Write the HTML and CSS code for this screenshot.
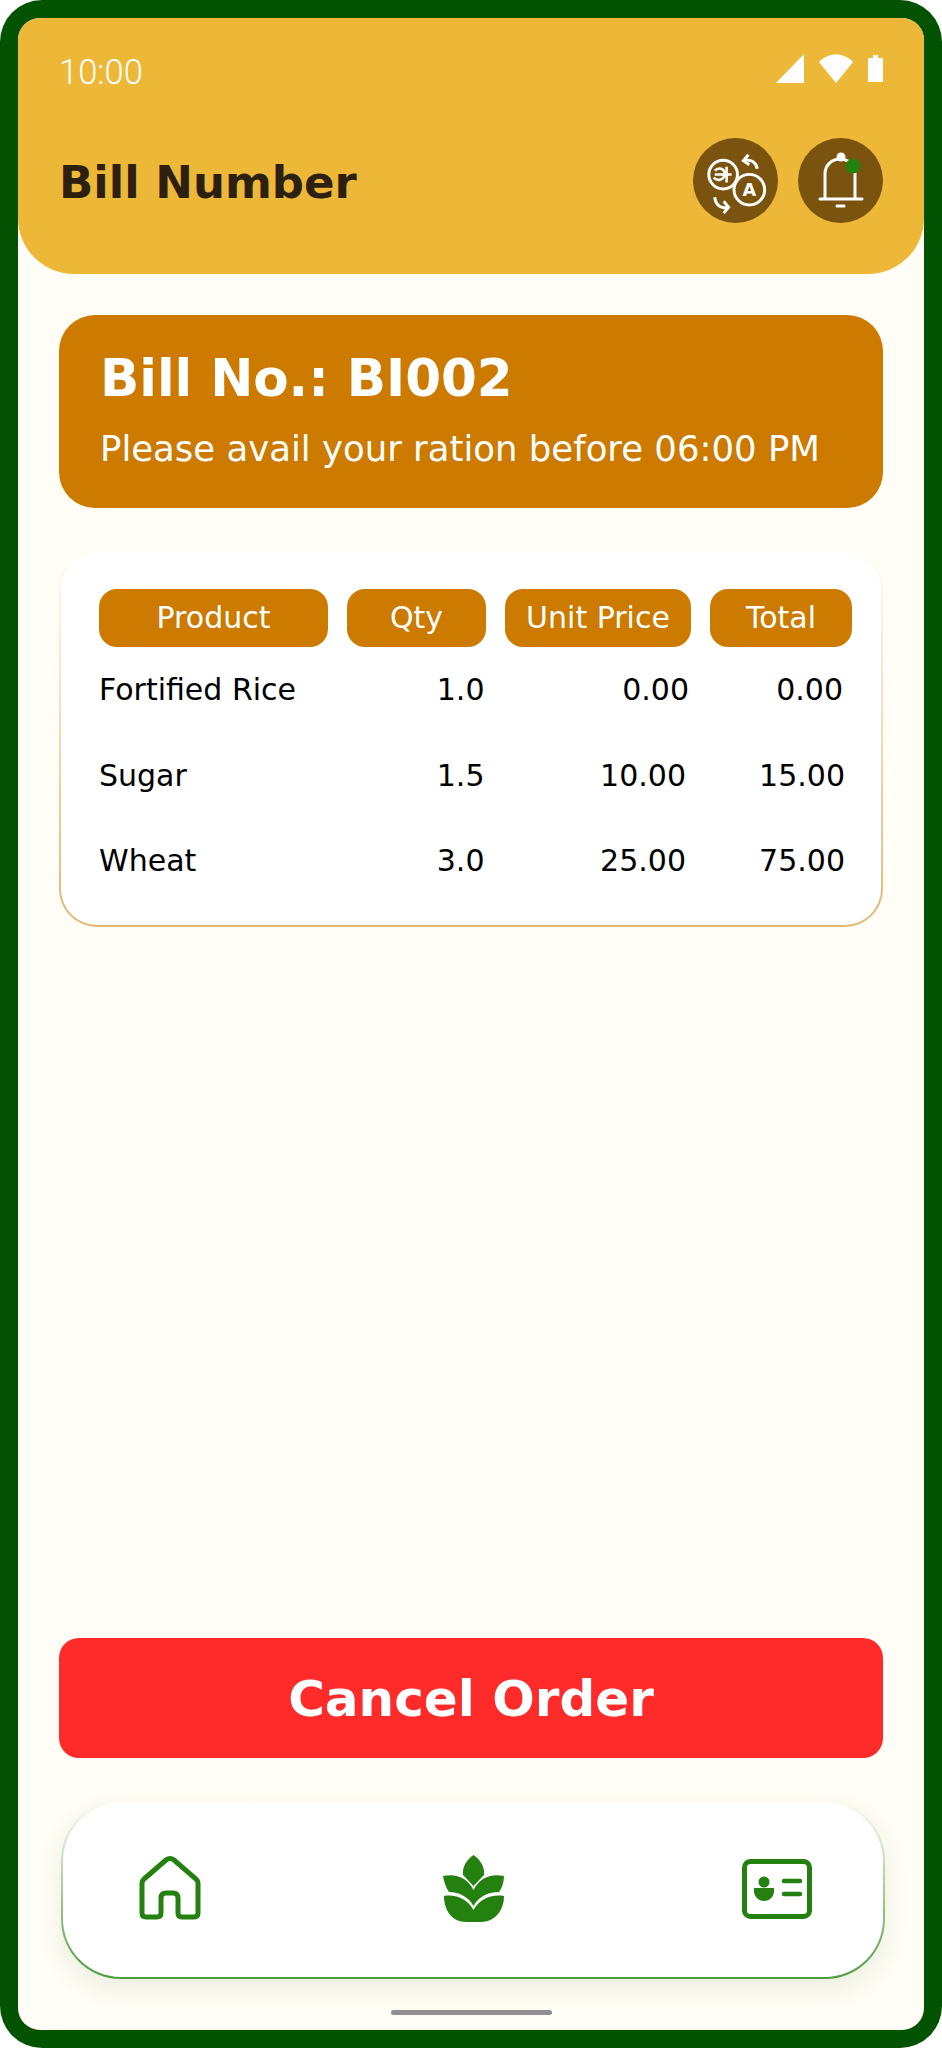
FILE: index.html
```html
<!DOCTYPE html>
<html lang="en">

<head>
    <meta charset="UTF-8">
    <meta name="viewport" content="width=device-width, initial-scale=1.0">
    <title>Bill Number</title>
    <link rel="stylesheet" href="styles.css">
</head>

<body>
    <div class="frame">
        <div class="screen">
            <header class="top">
                <div class="status">
                    <span class="time">10:00</span>
                    <div class="status-icons">
                        <svg class="sig" viewBox="0 0 28 29"><path d="M28 0V29H0Z" /></svg>
                        <svg class="wifi" viewBox="0 0 34 29"><path d="M0 8C9-2 25-2 34 8L17 29Z" /></svg>
                        <svg class="batt" viewBox="0 0 15 27"><path d="M5 0H10V3H15V27H0V3H5Z" /></svg>
                    </div>
                </div>
                <div class="title-row">
                    <h1>Bill Number</h1>
                    <div class="round-btns">
                        <div class="round-btn">
                            <svg viewBox="7 7 86 86" fill="none" stroke="#fff">
                                <circle cx="37.5" cy="44" r="14.5" stroke-width="3" />
                                <circle cx="64" cy="59.3" r="15.5" stroke-width="3" />
                                <path d="M29 40C33 36 39 38 39 43C39 50 31 51 28 47M29 44H46M41 36V52" stroke-width="2.6" />
                                <text x="64" y="65.5" class="lang-a">A</text>
                                <path d="M59 30C66 28 71 32 72 38M63 24L58 30L64 34" stroke-width="3" />
                                <path d="M42 77C35 79 30 75 29 67M38 71L43 77L38 83" stroke-width="3" />
                            </svg>
                        </div>
                        <div class="round-btn">
                            <svg viewBox="0 0 85 85" fill="none" stroke="#fff" stroke-width="3">
                                <path d="M27 61V36C27 27 34 21 42 21C50 21 57 27 57 36V61" />
                                <path d="M22 61H64M39 68H46" stroke-linecap="round" />
                                <circle cx="43" cy="19" r="4.5" fill="#fff" stroke="none" />
                                <circle cx="55" cy="28" r="7.5" fill="#248110" stroke="none" />
                            </svg>
                        </div>
                    </div>
                </div>
            </header>

            <main class="content">
                <section class="bill-card">
                    <h2>Bill No.: BI002</h2>
                    <p>Please avail your ration before 06:00 PM</p>
                </section>

                <section class="table-card">
                    <div class="cols head">
                        <div>Product</div>
                        <div>Qty</div>
                        <div>Unit Price</div>
                        <div>Total</div>
                    </div>
                    <div class="cols body">
                        <div>Fortified Rice</div>
                        <div class="num">1.0</div>
                        <div class="num zero">0.00</div>
                        <div class="num zero">0.00</div>

                        <div>Sugar</div>
                        <div class="num">1.5</div>
                        <div class="num">10.00</div>
                        <div class="num">15.00</div>

                        <div>Wheat</div>
                        <div class="num">3.0</div>
                        <div class="num">25.00</div>
                        <div class="num">75.00</div>
                    </div>
                </section>

                <button class="cancel">Cancel Order</button>

                <nav class="bottom-nav">
                    <svg viewBox="0 0 100 100" fill="none" stroke="#248110" stroke-width="5">
                        <path d="M24 39L46 20Q50 17 54 20L76 39Q78 41 78 43V73Q78 77 74 77H62Q58 77 58 73V58Q58 53 53 53H46Q41 53 41 58V73Q41 77 37 77H26Q22 77 22 73V43Q22 41 24 39Z" />
                    </svg>
                    <svg viewBox="0 0 100 100" fill="#248110">
                        <path d="M48.5 15C41 20 37 28 38 35L48.5 46L59 35C60 28 56 20 48.5 15Z" />
                        <path d="M18 36C31 33 43 38 48.5 50C54 38 66 33 79 36C79 42 77 48 74 52C64 52 54 56 48.5 66C43 56 33 52 24 52C21 48 19 42 18 36Z" />
                        <path d="M19 56C32 54 43 60 48.5 70C54 60 65 54 79 56C79 70 70 82 56 82H41C27 82 19 70 19 56Z" />
                    </svg>
                    <svg viewBox="0 0 100 100" fill="none" stroke="#248110">
                        <rect x="15.5" y="21.5" width="65" height="55" rx="6" stroke-width="5" />
                        <circle cx="35" cy="42" r="5.5" fill="#248110" stroke="none" />
                        <path d="M25 48H45C46 56 41 61 35 61C29 61 24 56 25 48Z" fill="#248110" stroke="none" />
                        <path d="M55 41H71M55 54H71" stroke-width="4.5" stroke-linecap="round" />
                    </svg>
                </nav>

                <div class="home-bar"></div>
            </main>
        </div>
    </div>
</body>

</html>
```

FILE: styles.css
```css
* {
    box-sizing: border-box;
}

body {
    margin: 0;
    background: #fff;
    font-family: "DejaVu Sans", sans-serif;
}

.frame {
    width: 942px;
    height: 2048px;
    padding: 18px;
    background: #035303;
    border-radius: 42px;
}

.screen {
    height: 100%;
    display: flex;
    flex-direction: column;
    background: #fffdf5;
    border-radius: 22px;
    overflow: hidden;
}

.top {
    height: 256px;
    padding: 34px 41px 0 41px;
    background: #edb738;
    border-radius: 0 0 56px 56px;
}

.status {
    height: 32px;
    display: flex;
    justify-content: space-between;
    align-items: center;
}

.time {
    position: relative;
    top: 4px;
    font-family: Roboto, sans-serif;
    font-weight: 300;
    font-size: 34.5px;
    color: #fff;
}

.status-icons {
    display: flex;
    align-items: center;
    gap: 15px;
    fill: #fff;
}

.sig {
    width: 28px;
    height: 29px;
}

.wifi {
    width: 34px;
    height: 29px;
}

.batt {
    width: 15px;
    height: 27px;
}

.title-row {
    margin-top: 54px;
    display: flex;
    justify-content: space-between;
    align-items: center;
}

h1 {
    margin: 4px 0 0;
    font-size: 45px;
    font-weight: bold;
    color: #2d2010;
}

.round-btns {
    display: flex;
    gap: 20px;
}

.round-btn {
    width: 85px;
    height: 85px;
    border-radius: 50%;
    background: #7a530e;
}

.round-btn svg {
    display: block;
    width: 85px;
    height: 85px;
}

.lang-a {
    font-family: "DejaVu Sans", sans-serif;
    font-size: 18px;
    font-weight: bold;
    text-anchor: middle;
    fill: #fff;
    stroke: none;
}

.content {
    flex: 1;
    display: flex;
    flex-direction: column;
    padding: 41px 40px 15px;
}

.bill-card {
    height: 193px;
    margin: 0 1px;
    padding: 33px 41px 0;
    background: #cc7a00;
    border-radius: 36px;
    color: #fff;
}

.bill-card h2 {
    margin: 0;
    font-size: 51.5px;
    line-height: 60px;
}

.bill-card p {
    margin: 19px 0 0;
    font-size: 35.5px;
    line-height: 44px;
}

.table-card {
    margin: 42px 1px 0;
    height: 377px;
    padding: 37px 0 0 38px;
    border: 2px solid transparent;
    border-radius: 38px;
    background: linear-gradient(#fff, #fff) padding-box, linear-gradient(#fffdf5, #e3b672) border-box;
}

.cols {
    display: grid;
    grid-template-columns: 229px 139px 186px 142px;
    column-gap: 19px;
    font-size: 30px;
}

.head {
    height: 58px;
    color: #fff;
    text-align: center;
}

.head div {
    background: #cc7a00;
    border-radius: 18px;
    line-height: 58px;
}

.body {
    margin-top: 23px;
    grid-auto-rows: 40px;
    row-gap: 45.5px;
    line-height: 40px;
    color: #000;
}

.num {
    text-align: right;
    padding-right: 5px;
}

.cols .num:nth-child(4n+2) {
    padding-right: 1.5px;
}

.cols .num:nth-child(4n) {
    padding-right: 7px;
}

.cols .zero {
    padding-right: 2px;
}

.cols .zero:nth-child(4n) {
    padding-right: 9px;
}

.cancel {
    margin: auto 1px 0;
    height: 120px;
    padding-top: 3px;
    border: 0;
    border-radius: 20px;
    background: #ff2a2a;
    color: #fff;
    font-family: "DejaVu Sans", sans-serif;
    font-size: 50px;
    font-weight: bold;
}

.bottom-nav {
    margin: 43px -1px 0 3px;
    height: 178px;
    padding: 0 54px 0 57px;
    display: flex;
    justify-content: space-between;
    align-items: center;
    border: 2px solid transparent;
    border-radius: 60px;
    background: linear-gradient(#fff, #fff) padding-box, linear-gradient(#fffdf5, #4d9c3f) border-box;
    box-shadow: 0 10px 26px rgba(40, 90, 20, 0.09);
}

.bottom-nav svg {
    width: 100px;
    height: 100px;
}

.home-bar {
    width: 161px;
    height: 5px;
    margin: 31px auto 0;
    border-radius: 3px;
    background: #909090;
}
```
